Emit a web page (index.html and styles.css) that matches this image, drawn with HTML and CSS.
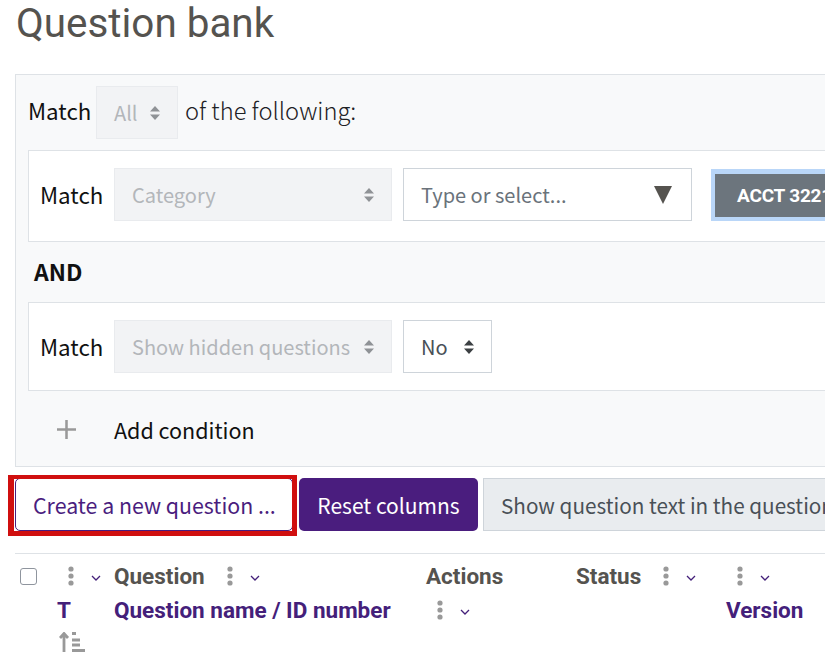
FILE: index.html
```html
<!DOCTYPE html>
<html lang="en">
<head>
    <meta charset="UTF-8">
    <title>Question bank</title>
    <link rel="stylesheet" href="styles.css">
</head>
<body>
    <svg class="sprite" width="0" height="0">
        <symbol id="updown" viewBox="0 0 10 14">
            <path d="M5 0 L10 5.5 H0 Z M5 14 L0 8.5 H10 Z"/>
        </symbol>
        <symbol id="dots" viewBox="0 0 6 20">
            <circle cx="3" cy="3" r="2.6"/>
            <circle cx="3" cy="10" r="2.6"/>
            <circle cx="3" cy="17" r="2.6"/>
        </symbol>
        <symbol id="chevron" viewBox="0 0 10 6">
            <path d="M1 1 L5 5 L9 1" fill="none" stroke="currentColor" stroke-width="1.3"/>
        </symbol>
    </svg>

    <main class="page">
        <h1>Question bank</h1>

        <section class="filter">
            <div class="filter-head">
                <span class="match head-label">Match</span>
                <div class="select disabled select-all">All <svg class="updown"><use href="#updown"/></svg></div>
                <span class="light head-label">of the following:</span>
            </div>

            <div class="condition condition-tall">
                <span class="match">Match</span>
                <div class="select disabled select-type">Category <svg class="updown"><use href="#updown"/></svg></div>
                <div class="select select-search">Type or select...
                    <svg class="caret" viewBox="0 0 18 18"><path d="M0 0 H18 L9 18 Z"/></svg>
                </div>
                <div class="tag-focus"><span class="tag">ACCT 3221 Managerial</span></div>
            </div>

            <div class="and">AND</div>

            <div class="condition">
                <span class="match">Match</span>
                <div class="select disabled select-type">Show hidden questions <svg class="updown"><use href="#updown"/></svg></div>
                <div class="select select-no">No <svg class="updown"><use href="#updown"/></svg></div>
            </div>

            <div class="add-condition">
                <svg class="plus" viewBox="0 0 18 18"><path d="M9 0 V18 M0 9 H18"/></svg>
                <span>Add condition</span>
            </div>
        </section>

        <div class="actions-bar">
            <div class="highlight-wrap">
                <button class="btn btn-outline">Create a new question ...</button>
                <span class="highlight"></span>
            </div>
            <button class="btn btn-primary">Reset columns</button>
            <button class="btn btn-secondary">Show question text in the question bank list</button>
        </div>

        <div class="table-head">
            <div class="col"><span class="checkbox"></span></div>
            <div class="col">
                <div class="col-row"><svg class="dots"><use href="#dots"/></svg><svg class="chevron"><use href="#chevron"/></svg></div>
                <div class="col-row sort-label">T</div>
                <svg class="sort-icon" viewBox="0 0 26 20">
                    <path class="sort-arrow" d="M5 20 V2 M1 6 L5 1.5 L9 6"/>
                    <path class="sort-lines" d="M13 1.5 H17 M13 8 H21 M13 13 H21 M13 18.5 H26"/>
                </svg>
            </div>
            <div class="col">
                <div class="col-row"><span class="col-title">Question</span><svg class="dots"><use href="#dots"/></svg><svg class="chevron"><use href="#chevron"/></svg></div>
                <div class="col-row sort-label">Question name / ID number</div>
            </div>
            <div class="col">
                <div class="col-row"><span class="col-title">Actions</span></div>
                <div class="col-row"><svg class="dots"><use href="#dots"/></svg><svg class="chevron"><use href="#chevron"/></svg></div>
            </div>
            <div class="col">
                <div class="col-row"><span class="col-title">Status</span><svg class="dots"><use href="#dots"/></svg><svg class="chevron"><use href="#chevron"/></svg></div>
            </div>
            <div class="col">
                <div class="col-row"><svg class="dots"><use href="#dots"/></svg><svg class="chevron"><use href="#chevron"/></svg></div>
                <div class="col-row sort-label">Version</div>
            </div>
        </div>
    </main>
</body>
</html>
```

FILE: styles.css
```css
html, body {
    margin: 0;
    padding: 0;
    height: 669px;
    overflow: hidden;
    background-color: #fff;
}
body {
    font-family: "Noto Sans CJK SC", "Noto Sans", sans-serif;
    font-size: 20px;
    color: #1d2125;
}
.sprite {
    position: absolute;
}
.page {
    width: 1100px;
    padding-left: 15px;
}
h1 {
    margin: 0;
    height: 74px;
    padding-left: 1px;
    font-family: Roboto, sans-serif;
    font-size: 40.4px;
    font-weight: 400;
    line-height: 47px;
    color: #55534f;
}

/* filter box */
.filter {
    height: 393px;
    box-sizing: border-box;
    padding: 11px 12px 0;
    background-color: #f8f9fa;
    border: 1px solid #dee2e6;
}
.filter-head {
    display: flex;
    align-items: center;
    height: 53px;
    margin-bottom: 11px;
}
.match {
    width: 63px;
    padding-bottom: 2px;
    font-size: 22.3px;
    color: #111;
}
.head-label {
    width: 68px;
    padding-bottom: 2px;
    margin-top: -2px;
    margin-bottom: 2px;
}
.light {
    width: auto;
    margin-left: 7px;
    font-size: 23.7px;
    font-weight: 300;
    color: #1d2125;
}
.condition {
    display: flex;
    align-items: center;
    gap: 11px;
    padding: 17px 11px;
    background-color: #fff;
    border: 1px solid #dee2e6;
}
.condition-tall {
    padding-bottom: 20px;
}
.select {
    display: flex;
    align-items: center;
    justify-content: space-between;
    box-sizing: border-box;
    height: 53px;
    padding: 0 17px;
    background-color: #fff;
    border: 1px solid #ced4da;
    color: #495057;
    white-space: nowrap;
}
.select.disabled {
    background-color: #f2f3f5;
    border-color: #e9ebee;
    color: #b3b6ba;
}
.select-all {
    width: 82px;
}
.select-type {
    width: 278px;
}
.select-search {
    width: 289px;
    color: #6a737b;
    padding-right: 19px;
}
.select-no {
    width: 89px;
}
.updown {
    width: 10px;
    height: 14px;
    fill: #3c4043;
}
.disabled .updown {
    fill: #8f9296;
}
.caret {
    width: 18px;
    height: 18px;
    fill: #55534f;
}
.tag-focus {
    margin-left: 8px;
    padding: 5px 0 4px 4px;
    background-color: #b9d6f8;
}
.tag {
    display: block;
    padding: 0 22px;
    height: 43px;
    line-height: 43px;
    background-color: #6c757d;
    color: #fff;
    font-family: Roboto, sans-serif;
    font-size: 19px;
    font-weight: 700;
    letter-spacing: -0.2px;
    white-space: nowrap;
}
.and {
    height: 60px;
    line-height: 58px;
    padding-left: 6px;
    font-size: 23px;
    font-weight: 700;
    color: #111;
}
.add-condition {
    display: flex;
    align-items: center;
    height: 76px;
    padding-left: 29px;
    font-size: 21.5px;
    color: #111;
}
.plus {
    width: 19px;
    height: 19px;
    margin-right: 38px;
    fill: none;
    stroke: #999;
    stroke-width: 2.4;
}

/* buttons */
.actions-bar {
    display: flex;
    gap: 6px;
    padding-top: 11px;
    height: 53px;
    white-space: nowrap;
}
.highlight-wrap {
    position: relative;
    height: 53px;
}
.btn {
    display: block;
    box-sizing: border-box;
    height: 53px;
    padding: 0 17px;
    font-family: inherit;
    font-size: 21px;
    border-radius: 5px;
    border: 1px solid transparent;
}
.btn-outline {
    width: 278px;
    background-color: #fff;
    border-color: #4a1d7e;
    color: #4a1d7e;
    font-size: 21.35px;
    text-align: left;
}
.btn-primary {
    width: 179px;
    background-color: #4a1d7e;
    color: #fff;
}
.btn-secondary {
    margin-left: -1px;
    background-color: #e9ecef;
    border-color: #ced4da;
    border-radius: 0;
    color: #495057;
    font-size: 20.7px;
}
.highlight {
    position: absolute;
    top: -3px;
    bottom: -5px;
    left: -7px;
    right: -4px;
    border: solid #d00f0f;
    border-width: 4px 5px 5px 6px;
}

/* question table header */
.table-head {
    display: grid;
    grid-template-columns: 42px 57px 312px 150px 150px 200px;
    margin-top: 22px;
    padding-top: 5px;
    border-top: 1px solid #dee2e6;
}
.col-row {
    display: flex;
    align-items: center;
    height: 34px;
}
.col-title, .sort-label {
    font-family: Roboto, sans-serif;
    font-size: 22.5px;
    font-weight: 700;
    color: #55534f;
    white-space: nowrap;
}
.sort-label {
    color: #44207a;
}
.checkbox {
    display: block;
    width: 15px;
    height: 15px;
    margin: 9px 0 0 5px;
    background-color: #fff;
    border: 1px solid #8f959e;
    border-radius: 3px;
}
.dots {
    width: 6px;
    height: 20px;
    margin-left: 11px;
    fill: #999;
}
.col-title + .dots {
    margin-left: 22px;
}
.chevron {
    width: 10px;
    height: 6px;
    margin: 3px 0 0 17px;
    color: #44207a;
}
.sort-icon {
    display: block;
    width: 26px;
    height: 20px;
    margin: 5px 0 0 2px;
}
.sort-arrow, .sort-lines {
    fill: none;
    stroke: #999;
    stroke-width: 2.8;
}
```
